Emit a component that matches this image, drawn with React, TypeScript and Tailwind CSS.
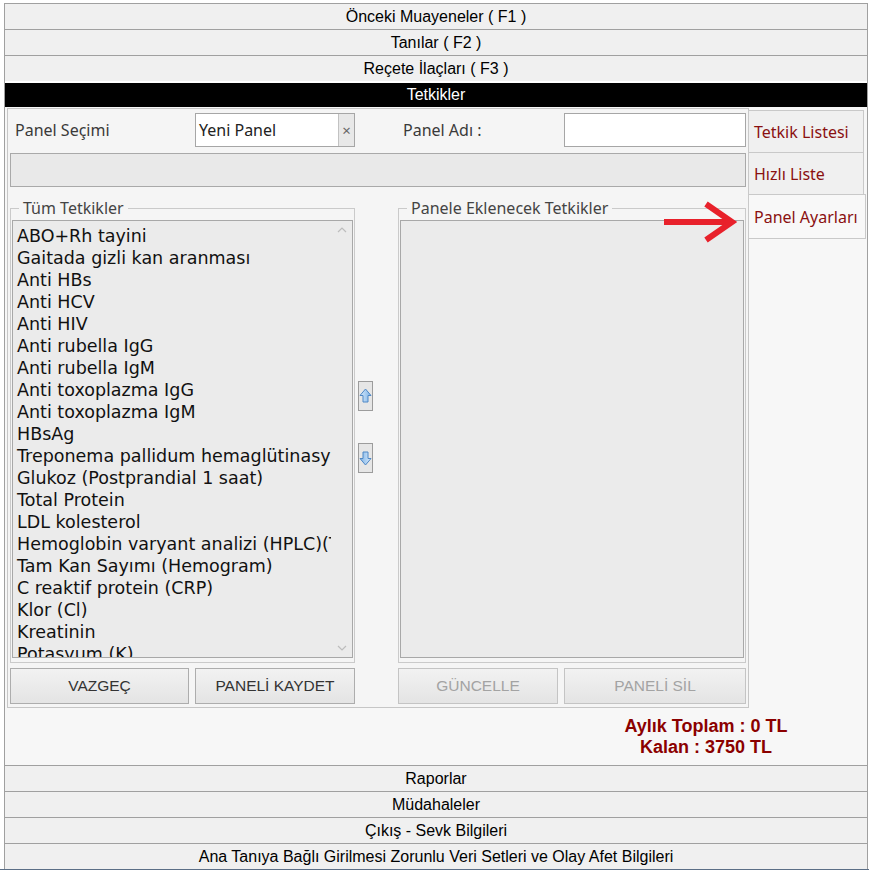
const tests = [
  "ABO+Rh tayini",
  "Gaitada gizli kan aranması",
  "Anti HBs",
  "Anti HCV",
  "Anti HIV",
  "Anti rubella IgG",
  "Anti rubella IgM",
  "Anti toxoplazma IgG",
  "Anti toxoplazma IgM",
  "HBsAg",
  "Treponema pallidum hemaglütinasyon",
  "Glukoz (Postprandial 1 saat)",
  "Total Protein",
  "LDL kolesterol",
  "Hemoglobin varyant analizi (HPLC)(Talasemi)",
  "Tam Kan Sayımı (Hemogram)",
  "C reaktif protein (CRP)",
  "Klor (Cl)",
  "Kreatinin",
  "Potasyum (K)",
];

const headFont = "font-['Liberation_Sans',Arial,sans-serif]";
const uiFont = "font-['Noto_Sans','Open_Sans',sans-serif]";

function SectionRow({ label, active = false }: { label: string; active?: boolean }) {
  if (active) {
    return (
      <div className={`mt-[2px] flex h-[24px] items-center justify-center bg-black text-[16px] text-white ${headFont}`}>
        {label}
      </div>
    );
  }
  return (
    <div className={`flex h-[26px] items-center justify-center border-t border-[#a0a0a0] bg-[#f0f0f0] text-[16px] text-black ${headFont}`}>
      {label}
    </div>
  );
}

function ArrowButton({ down = false }: { down?: boolean }) {
  return (
    <div className="flex h-[30px] w-[15px] items-center justify-center border border-[#9c9c9c] bg-[#e6e6e6]">
      <svg width="13" height="16" viewBox="0 0 13 16" className={down ? "rotate-180" : ""}>
        <defs>
          <linearGradient id={down ? "ag-d" : "ag-u"} x1="0" y1="0" x2="1" y2="0">
            <stop offset="0" stopColor="#d6e9fb" />
            <stop offset="1" stopColor="#7fb3e6" />
          </linearGradient>
        </defs>
        <path
          d="M6.5 1 L12 7.5 L9 7.5 L9 14 L4 14 L4 7.5 L1 7.5 Z"
          fill={`url(#${down ? "ag-d" : "ag-u"})`}
          stroke="#4f88c6"
          strokeWidth="1"
          strokeLinejoin="round"
        />
      </svg>
    </div>
  );
}

function Chevron({ down = false }: { down?: boolean }) {
  return (
    <svg width="10" height="6" viewBox="0 0 10 6">
      <path d={down ? "M1 1 L5 5 L9 1" : "M1 5 L5 1 L9 5"} fill="none" stroke="#bdbdbd" strokeWidth="1.2" />
    </svg>
  );
}

function Button({ label, width, disabled = false }: { label: string; width: string; disabled?: boolean }) {
  return (
    <div
      className={`flex h-[36px] items-center justify-center border bg-gradient-to-b from-[#f2f2f2] to-[#e4e4e4] text-[15.5px] ${headFont} ${width} ${
        disabled ? "border-[#c4c4c4] text-[#a3a3a3]" : "border-[#adadad] text-[#333]"
      }`}
    >
      {label}
    </div>
  );
}

function SideTab({ label, active = false }: { label: string; active?: boolean }) {
  return (
    <div
      className={`flex items-center border border-[#c9c9c9] pl-[5px] text-[16px] text-[#8a1010] ${uiFont} ${
        active ? "-mt-px h-[45px] w-[118px] bg-[#f8f8f8]" : "h-[43px] w-[116px] bg-[#f0f0f0]"
      }`}
    >
      {label}
    </div>
  );
}

export default function App() {
  return (
    <div className="relative h-[870px] w-[869px] overflow-hidden bg-white pt-[3px]">
      <div className="ml-[4px] w-[864px] border-x border-[#a0a0a0]">
        <SectionRow label="Önceki Muayeneler ( F1 )" />
        <SectionRow label="Tanılar ( F2 )" />
        <SectionRow label="Reçete İlaçları ( F3 )" />
        <SectionRow label="Tetkikler" active />

        {/* Tetkikler content */}
        <div className="bg-[#f7f7f7] pt-[1px]">
          <div className="flex">
            {/* main panel */}
            <div className={`ml-[2px] h-[600px] w-[742px] border border-[#c6c6c6] bg-[#f5f5f5] pl-[2px] pt-[4px] ${uiFont}`}>
              <div className="flex h-[34px] items-center text-[16px] text-[#3a3a3a]">
                <div className="w-[185px] pl-[5px]">Panel Seçimi</div>
                <div className="flex h-[34px] w-[160px] border border-[#a6a6a6] bg-white">
                  <div className="flex flex-1 items-center pl-[3px] text-[#222]">Yeni Panel</div>
                  <div className="flex w-[16px] items-center justify-center border-l border-[#c2c2c2] bg-[#e8e8e8] text-[15px] text-[#666]">
                    ×
                  </div>
                </div>
                <div className="w-[43px]" />
                <div className="w-[166px] pl-[5px]">Panel Adı :</div>
                <div className="h-[34px] w-[182px] border border-[#a6a6a6] bg-white" />
              </div>

              <div className="mt-[6px] h-[34px] w-[736px] border border-[#a9a9a9] bg-[#e9e9e9]" />

              <div className="mt-[13px] flex">
                <fieldset className="h-[463px] w-[345px] border border-[#cacaca]">
                  <legend className="ml-[8px] px-[4px] text-[16px] leading-[17px] text-[#444]">Tüm Tetkikler</legend>
                  <div className="relative mx-px mt-[3px] h-[438px] overflow-hidden border border-[#a8a8a8] bg-[#ebebeb] pt-[4px] font-['DejaVu_Sans',Verdana,sans-serif] text-[17.5px] text-[#111]">
                    {tests.map((t) => (
                      <div key={t} className="h-[22px] w-[318px] overflow-hidden whitespace-nowrap pl-[4px] leading-[22px]">
                        {t}
                      </div>
                    ))}
                    <div className="absolute right-[5px] top-[6px]">
                      <Chevron />
                    </div>
                    <div className="absolute bottom-[6px] right-[5px]">
                      <Chevron down />
                    </div>
                  </div>
                </fieldset>

                <div className="flex w-[43px] flex-col pl-[3px] pt-[181px]">
                  <ArrowButton />
                  <div className="h-[32px]" />
                  <ArrowButton down />
                </div>

                <fieldset className="h-[463px] w-[348px] border border-[#cacaca]">
                  <legend className="ml-[8px] px-[4px] text-[16px] leading-[17px] text-[#444]">Panele Eklenecek Tetkikler</legend>
                  <div className="mx-px mt-[3px] h-[438px] border border-[#a8a8a8] bg-[#ebebeb]" />
                </fieldset>
              </div>

              <div className="mt-[5px] flex">
                <Button label="VAZGEÇ" width="w-[179px]" />
                <div className="w-[6px]" />
                <Button label="PANELİ KAYDET" width="w-[160px]" />
                <div className="w-[43px]" />
                <Button label="GÜNCELLE" width="w-[160px]" disabled />
                <div className="w-[6px]" />
                <Button label="PANELİ SİL" width="w-[182px]" disabled />
              </div>
            </div>

            {/* side tabs */}
            <div className="-ml-px flex flex-col pt-[2px]">
              <SideTab label="Tetkik Listesi" />
              <div className="-mt-px" />
              <SideTab label="Hızlı Liste" />
              <SideTab label="Panel Ayarları" active />
            </div>
          </div>

          <div className={`flex h-[57px] flex-col items-center justify-center pl-[540px] text-[18px] font-bold leading-[21px] text-[#8b0000] ${headFont}`}>
            <div>Aylık Toplam : 0 TL</div>
            <div>Kalan : 3750 TL</div>
          </div>
        </div>

        <SectionRow label="Raporlar" />
        <SectionRow label="Müdahaleler" />
        <SectionRow label="Çıkış - Sevk Bilgileri" />
        <SectionRow label="Ana Tanıya Bağlı Girilmesi Zorunlu Veri Setleri ve Olay Afet Bilgileri" />
      </div>
      <div className="h-[2px] w-full bg-[#5b6e86]" />

      {/* red pointer arrow */}
      <svg className="absolute left-[662px] top-[201px]" width="76" height="42" viewBox="0 0 76 42">
        <path d="M2 21 H66" stroke="#e8212b" strokeWidth="6" />
        <path d="M44 3 L70 21 L44 39" fill="none" stroke="#e8212b" strokeWidth="6" strokeLinejoin="miter" />
      </svg>
    </div>
  );
}
